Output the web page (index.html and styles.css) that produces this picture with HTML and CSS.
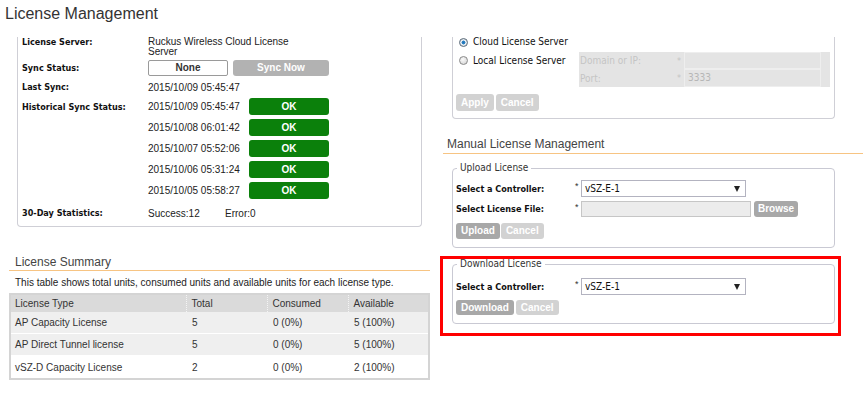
FILE: index.html
```html
<!DOCTYPE html>
<html>
<head>
<meta charset="utf-8">
<title>License Management</title>
<link rel="stylesheet" href="styles.css">
</head>
<body>
<div class="page">
  <h1 class="title">License Management</h1>
  <div class="cols">
    <div class="col-left">
      <div class="panel status">
        <div class="row r-server">
          <span class="lbl">License Server:</span>
          <span class="val wrap">Ruckus Wireless Cloud License Server</span>
        </div>
        <div class="row r-sync">
          <span class="lbl">Sync Status:</span>
          <span class="btn-none">None</span>
          <span class="btn-sync">Sync Now</span>
        </div>
        <div class="row r-last">
          <span class="lbl">Last Sync:</span>
          <span class="val">2015/10/09 05:45:47</span>
        </div>
        <div class="hist">
          <div class="hist-lbl"><span class="lbl">Historical Sync Status:</span></div>
          <div class="hist-list">
            <div class="hrow"><span class="date">2015/10/09 05:45:47</span><span class="ok">OK</span></div>
            <div class="hrow"><span class="date">2015/10/08 06:01:42</span><span class="ok">OK</span></div>
            <div class="hrow"><span class="date">2015/10/07 05:52:06</span><span class="ok">OK</span></div>
            <div class="hrow"><span class="date">2015/10/06 05:31:24</span><span class="ok">OK</span></div>
            <div class="hrow"><span class="date">2015/10/05 05:58:27</span><span class="ok">OK</span></div>
          </div>
        </div>
        <div class="row r-stat">
          <span class="lbl">30-Day Statistics:</span>
          <span class="val succ">Success:12</span>
          <span class="val">Error:0</span>
        </div>
      </div>

      <section class="summary">
        <h2 class="sec-h sum-h">License Summary</h2>
        <p class="desc">This table shows total units, consumed units and available units for each license type.</p>
        <div class="tbl-wrap">
          <table class="lic">
            <colgroup><col class="c1"><col class="c2"><col class="c3"><col class="c4"></colgroup>
            <thead>
              <tr><th>License Type</th><th>Total</th><th>Consumed</th><th>Available</th></tr>
            </thead>
            <tbody>
              <tr class="shade"><td>AP Capacity License</td><td>5</td><td>0 (0%)</td><td>5 (100%)</td></tr>
              <tr class="shade"><td>AP Direct Tunnel license</td><td>5</td><td>0 (0%)</td><td>5 (100%)</td></tr>
              <tr><td>vSZ-D Capacity License</td><td>2</td><td>0 (0%)</td><td>2 (100%)</td></tr>
            </tbody>
          </table>
        </div>
      </section>
    </div>

    <div class="col-right">
      <div class="panel server">
        <div class="rrow first">
          <span class="radio on"></span><span class="rlabel">Cloud License Server</span>
        </div>
        <div class="rrow second">
          <div class="rleft"><span class="radio"></span><span class="rlabel">Local License Server</span></div>
          <div class="local-grid">
            <span class="g-lbl">Domain or IP:</span><span class="g-star">*</span><span class="g-in"></span><span class="g-pad"></span>
            <span class="g-lbl">Port:</span><span class="g-star">*</span><span class="g-in">3333</span><span class="g-pad"></span>
          </div>
        </div>
        <div class="btns">
          <span class="b b-light">Apply</span><span class="b b-light">Cancel</span>
        </div>
      </div>

      <section class="manual">
        <h2 class="sec-h man-h">Manual License Management</h2>
        <fieldset class="fs upload">
          <legend>Upload License</legend>
          <div class="frow">
            <span class="flbl">Select a Controller:</span><span class="star">*</span>
            <span class="select"><span>vSZ-E-1</span><span class="arrow"></span></span>
          </div>
          <div class="frow row2">
            <span class="flbl">Select License File:</span><span class="star">*</span>
            <span class="file"></span>
            <span class="b b-dark browse">Browse</span>
          </div>
          <div class="btns fbtns">
            <span class="b b-dark">Upload</span><span class="b b-light">Cancel</span>
          </div>
        </fieldset>
        <div class="highlight">
          <fieldset class="fs download">
            <legend>Download License</legend>
            <div class="frow">
              <span class="flbl">Select a Controller:</span><span class="star">*</span>
              <span class="select"><span>vSZ-E-1</span><span class="arrow"></span></span>
            </div>
            <div class="btns dbtns">
              <span class="b b-dark">Download</span><span class="b b-light">Cancel</span>
            </div>
          </fieldset>
        </div>
      </section>
    </div>
  </div>
</div>
</body>
</html>
```

FILE: styles.css
```css
html, body {
  margin: 0;
  padding: 0;
  background: #fff;
}
body {
  font-family: "Liberation Sans", Arial, sans-serif;
  font-size: 10px;
  color: #222;
}
.page {
  width: 865px;
  height: 400px;
  overflow: hidden;
}
.title {
  margin: 0;
  height: 37px;
  box-sizing: border-box;
  padding: 5px 0 0 5px;
  font-size: 16px;
  line-height: 18px;
  font-weight: normal;
  color: #333;
}
.cols {
  display: grid;
  grid-template-columns: 440px 425px;
}

/* ---------- left status panel ---------- */
.panel {
  box-sizing: border-box;
  border: 1px solid #cfcfd6;
  border-top: none;
  border-radius: 0 0 4px 4px;
}
.status {
  margin-left: 17px;
  width: 405px;
  padding: 0 0 1px 4px;
}
.row {
  display: flex;
  align-items: center;
}
.lbl {
  width: 126px;
  flex: none;
  font-family: "DejaVu Sans Condensed", "DejaVu Sans", sans-serif;
  font-weight: bold;
  font-size: 9px;
  color: #111;
}
.val {
  color: #222;
}
.r-server {
  height: 21px;
  align-items: flex-start;
  line-height: 10px;
}
.wrap {
  width: 150px;
}
.r-sync {
  height: 20px;
}
.btn-none {
  box-sizing: border-box;
  width: 80px;
  height: 16px;
  border: 1px solid #9a9a9a;
  border-radius: 2px;
  text-align: center;
  line-height: 14px;
  font-weight: bold;
  color: #333;
}
.btn-sync {
  margin-left: 5px;
  width: 96px;
  height: 16px;
  border-radius: 3px;
  background: #b2b2b2;
  color: #fff;
  font-weight: bold;
  text-align: center;
  line-height: 16px;
}
.r-last {
  height: 18px;
}
.hist {
  display: flex;
}
.hist-lbl {
  width: 126px;
  height: 21px;
  display: flex;
  align-items: center;
}
.hrow {
  height: 21px;
  display: flex;
  align-items: center;
}
.date {
  width: 101px;
}
.ok {
  width: 80px;
  height: 17px;
  border-radius: 3px;
  background: #0b800b;
  color: #fff;
  font-weight: bold;
  text-align: center;
  line-height: 17px;
}
.r-stat {
  height: 24px;
}
.succ {
  width: 77px;
}

/* ---------- license summary ---------- */
.summary {
  margin: 28px 0 0 9px;
  width: 421px;
}
.sec-h {
  margin: 0;
  font-size: 12px;
  line-height: 14px;
  font-weight: normal;
  color: #444;
  border-bottom: 1px solid #f7c483;
}
.sum-h {
  padding: 0 0 1px 6px;
}
.desc {
  margin: 6px 0 4px 6px;
  line-height: 12px;
  color: #222;
}
.tbl-wrap {
  border: 2px solid #d4d4d4;
}
.lic {
  width: 417px;
  border-collapse: collapse;
  table-layout: fixed;
}
.c1 { width: 175px; }
.c2 { width: 81px; }
.c3 { width: 81px; }
.c4 { width: 80px; }
.lic th {
  height: 17px;
  padding: 0 0 0 5px;
  background: #dadada;
  color: #333;
  font-weight: normal;
  text-align: left;
  border-left: 1px dotted #f4f4f4;
}
.lic th:first-child {
  border-left: none;
  padding-left: 4px;
}
.lic td {
  height: 21px;
  padding: 0 0 0 6px;
  color: #333;
  border-bottom: 1px solid #fff;
}
.lic td:first-child {
  padding-left: 4px;
}
.lic tr.shade td {
  background: #efefef;
}
.lic tr:last-child td {
  height: 22px;
  border-bottom: none;
}

/* ---------- right server panel ---------- */
.server {
  margin-left: 12px;
  width: 383px;
  padding: 0 0 7px 3px;
}
.rrow {
  display: flex;
  align-items: center;
}
.rrow.first {
  height: 10px;
  margin-bottom: 5px;
}
.rrow.second {
  align-items: flex-start;
}
.rleft {
  width: 123px;
  height: 17px;
  display: flex;
  align-items: center;
}
.radio {
  box-sizing: border-box;
  width: 9px;
  height: 9px;
  margin: 0 5px 0 3px;
  border-radius: 50%;
  border: 1px solid #8a8a8a;
  background: radial-gradient(circle at 40% 35%, #fafafa 0, #d8d8d8 80%);
  flex: none;
}
.radio.on {
  border-color: #5a6a78;
  background: radial-gradient(circle at 50% 50%, #1e6fb3 0, #2f86c8 35%, #e8eef3 45%, #c9d1d8 100%);
}
.rlabel {
  font-family: "DejaVu Sans Condensed", "DejaVu Sans", sans-serif;
  font-size: 10px;
  line-height: 10px;
  color: #111;
}
.local-grid {
  display: grid;
  grid-template-columns: 98px 7px 137px 9px;
  grid-template-rows: 17px 18px;
  width: 251px;
  background: #e4e4e4;
  font-family: "DejaVu Sans Condensed", "DejaVu Sans", sans-serif;
  font-size: 10px;
  color: #c4c4c4;
}
.g-lbl {
  padding-left: 1px;
  align-self: center;
}
.g-star {
  align-self: center;
  font-size: 9px;
}
.g-in {
  box-sizing: border-box;
  border: 1px solid #eeeeee;
  padding-left: 3px;
  line-height: 15px;
  color: #b6b6b6;
}
.btns {
  display: flex;
  margin-top: 7px;
  height: 17px;
}
.b {
  height: 17px;
  padding: 0 5px;
  border-radius: 3px;
  color: #fff;
  font-weight: bold;
  line-height: 17px;
  margin-right: 2px;
}
.b-light {
  background: #d2d2d2;
}
.b-dark {
  background: #a8a8a8;
}

/* ---------- manual license management ---------- */
.man-h {
  margin: 18px 2px 0 3px;
  padding: 0 0 2px 4px;
}
.fs {
  box-sizing: border-box;
  margin: 0;
  min-width: 0;
  width: 383px;
  border: 1px solid #c9c9d3;
  border-radius: 4px;
  padding: 7px 3px 8px;
}
.fs legend {
  font-family: "DejaVu Sans Condensed", "DejaVu Sans", sans-serif;
  font-size: 10px;
  line-height: 10px;
  color: #333;
  padding: 0 3px;
  margin-left: 1px;
}
.upload {
  margin: 9px 0 0 12px;
}
.frow {
  display: flex;
  align-items: center;
  height: 17px;
}
.frow.row2 {
  margin-top: 4px;
  height: 16px;
}
.flbl {
  width: 119px;
  flex: none;
  font-family: "DejaVu Sans Condensed", "DejaVu Sans", sans-serif;
  font-weight: bold;
  font-size: 9px;
  color: #111;
}
.star {
  width: 6px;
  flex: none;
  font-size: 9px;
  color: #333;
  align-self: flex-start;
  line-height: 12px;
}
.select {
  box-sizing: border-box;
  width: 165px;
  height: 17px;
  border: 1px solid #b3b3c0;
  background: #fff;
  display: flex;
  align-items: center;
  justify-content: space-between;
  padding: 0 5px 0 3px;
  font-family: "DejaVu Sans Condensed", "DejaVu Sans", sans-serif;
  font-size: 10px;
  color: #111;
}
.arrow {
  width: 0;
  height: 0;
  border-left: 3.5px solid transparent;
  border-right: 3.5px solid transparent;
  border-top: 6px solid #222;
}
.file {
  box-sizing: border-box;
  width: 170px;
  height: 16px;
  border: 1px solid #c6c6c6;
  background: #ececec;
}
.browse {
  margin-left: 3px;
  height: 16px;
  line-height: 16px;
  padding: 0 4px;
}
.fbtns {
  margin-top: 6px;
  height: 16px;
}
.fbtns .b {
  height: 16px;
  line-height: 16px;
  margin-right: 1px;
}
.highlight {
  margin-top: 8px;
  width: 401px;
  box-sizing: border-box;
  border: 3px solid #ff0000;
  padding: 0 0 9px 9px;
}
.download {
  padding-top: 9px;
}
.dbtns {
  margin-top: 5px;
  height: 15px;
}
.dbtns .b {
  height: 15px;
  line-height: 15px;
  margin-right: 2px;
}
```
